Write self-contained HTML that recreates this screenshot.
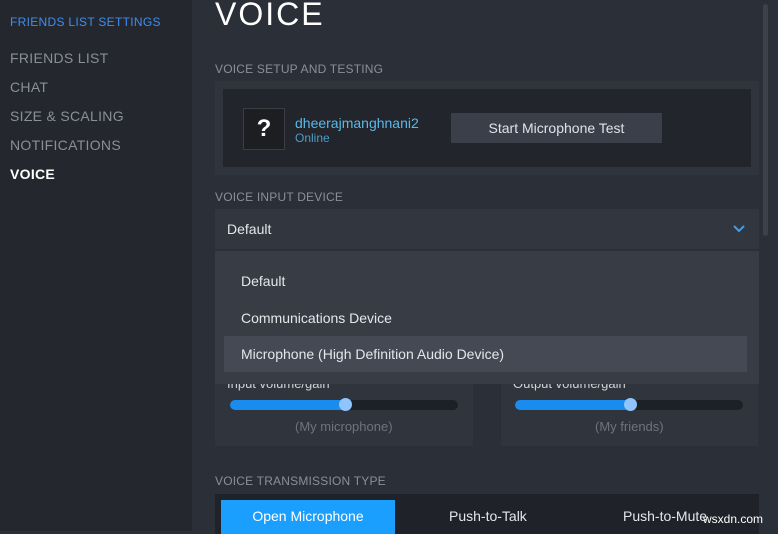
<!DOCTYPE html>
<html><head><style>
body{margin:0;width:778px;height:531px;overflow:hidden;background:#2b2f37;font-family:"Liberation Sans",sans-serif;position:relative}
div{position:absolute;box-sizing:border-box}
.side{left:0;top:0;width:192px;height:531px;background:#24272e}
.nav{left:10px;font-size:14px;color:#8a8f98;letter-spacing:.3px}
.h{left:215px;font-size:12px;color:#8a8f98;letter-spacing:.2px}
.t{white-space:nowrap}
</style></head><body>
<div class="side"></div>
<div class="nav t" style="top:15px;font-size:12px;color:#3d8ef0">FRIENDS LIST SETTINGS</div>
<div class="nav t" style="top:50px">FRIENDS LIST</div>
<div class="nav t" style="top:79px">CHAT</div>
<div class="nav t" style="top:108px">SIZE &amp; SCALING</div>
<div class="nav t" style="top:137px">NOTIFICATIONS</div>
<div class="nav t" style="top:166px;color:#fff;font-weight:bold">VOICE</div>
<div class="t" style="left:215px;top:-4px;font-size:32px;color:#fff;letter-spacing:2px">VOICE</div>
<div style="left:763px;top:4px;width:5px;height:232px;background:#3c414a;border-radius:3px"></div>
<div class="h t" style="top:62px">VOICE SETUP AND TESTING</div>
<div style="left:215px;top:81px;width:544px;height:94px;background:#30343c"></div>
<div style="left:223px;top:89px;width:528px;height:78px;background:#22252b"></div>
<div style="left:243px;top:108px;width:42px;height:42px;background:#1c1e22;border:1px solid #3a3d42;color:#fff;font-size:24px;font-weight:bold;text-align:center;line-height:40px">?</div>
<div class="t" style="left:295px;top:115px;font-size:14px;color:#5cb8e6">dheerajmanghnani2</div>
<div class="t" style="left:295px;top:131px;font-size:12px;color:#4b9dc6">Online</div>
<div style="left:451px;top:113px;width:211px;height:30px;background:#3a3f4a;color:#dfe3e8;font-size:14px;text-align:center;line-height:30px">Start Microphone Test</div>
<div class="h t" style="top:190px">VOICE INPUT DEVICE</div>
<div style="left:215px;top:209px;width:544px;height:40px;background:#32363f;border-radius:2px"></div>
<div class="t" style="left:227px;top:221px;font-size:14px;color:#e4e7ea">Default</div>
<svg style="position:absolute;left:733px;top:225px" width="12" height="8"><path d="M1 1l5 5 5-5" stroke="#3d9fe8" stroke-width="2" fill="none"/></svg>
<div style="left:215px;top:372px;width:258px;height:74px;background:#30343c"></div>
<div style="left:501px;top:372px;width:257px;height:74px;background:#30343c"></div>
<div class="t" style="left:227px;top:376px;font-size:13px;color:#cfd3d8">Input volume/gain</div>
<div class="t" style="left:513px;top:376px;font-size:13px;color:#cfd3d8">Output volume/gain</div>
<div style="left:230px;top:400px;width:228px;height:10px;background:#1d2026;border-radius:5px"></div>
<div style="left:230px;top:400px;width:116px;height:10px;background:#1a8cf0;border-radius:5px"></div>
<div style="left:339px;top:398px;width:13px;height:13px;background:#8fc4ff;border-radius:50%"></div>
<div style="left:515px;top:400px;width:228px;height:10px;background:#1d2026;border-radius:5px"></div>
<div style="left:515px;top:400px;width:116px;height:10px;background:#1a8cf0;border-radius:5px"></div>
<div style="left:624px;top:398px;width:13px;height:13px;background:#8fc4ff;border-radius:50%"></div>
<div class="t" style="left:295px;top:419px;font-size:13px;color:#6e747d">(My microphone)</div>
<div class="t" style="left:595px;top:419px;font-size:13px;color:#6e747d">(My friends)</div>
<div style="left:215px;top:251px;width:544px;height:133px;background:#383c45"></div>
<div style="left:224px;top:336px;width:523px;height:36px;background:#444953"></div>
<div class="t" style="left:241px;top:273px;font-size:14px;color:#e4e7ea">Default</div>
<div class="t" style="left:241px;top:310px;font-size:14px;color:#e4e7ea">Communications Device</div>
<div class="t" style="left:241px;top:346px;font-size:14px;color:#e4e7ea">Microphone (High Definition Audio Device)</div>
<div class="h t" style="top:474px">VOICE TRANSMISSION TYPE</div>
<div style="left:215px;top:494px;width:544px;height:40px;background:#1f2228"></div>
<div style="left:221px;top:500px;width:174px;height:34px;background:#1a9fff;color:#fff;font-size:14px;text-align:center;line-height:32px">Open Microphone</div>
<div class="t" style="left:449px;top:508px;font-size:14px;color:#e4e7ea">Push-to-Talk</div>
<div class="t" style="left:623px;top:508px;font-size:14px;color:#e4e7ea">Push-to-Mute</div>
<div class="t" style="left:703px;top:512px;font-size:12px;color:#fff">wsxdn.com</div>
</body></html>
